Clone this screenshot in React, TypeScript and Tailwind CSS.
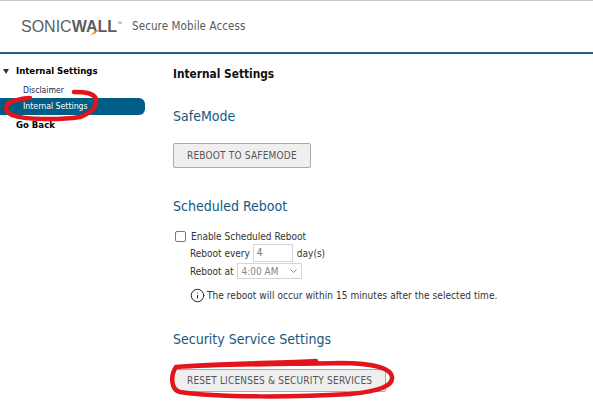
import { Info } from "lucide-react";

function SectionTitle({ children }: { children: string }) {
  return <h2 className="text-[14px] leading-5 font-normal text-[#14587f]">{children}</h2>;
}

function GrayButton({ children, short }: { children: string; short?: boolean }) {
  return (
    <button className={`${short ? "h-[23px]" : "h-[25px]"} px-[13px] bg-[#efefef] border border-[#a9a9a9] rounded-[2px] text-[10px] tracking-[0.2px] font-stretch-condensed text-[#555] whitespace-nowrap`}>
      {children}
    </button>
  );
}

export default function App() {
  return (
    <div className="relative w-[593px] h-[418px] overflow-hidden bg-white text-black font-['DejaVu_Sans',sans-serif] font-stretch-condensed">
      {/* Header */}
      <header className="h-[54px] border-t border-t-[#c8c8c8] border-b-2 border-b-[#1f6088] flex items-center pl-[21px]">
        <div className="relative flex items-start text-[#5d5d5d] font-['Liberation_Sans',sans-serif] text-[16px] leading-5">
          <span className="font-light">SONIC</span>
          <span className="font-bold">WALL</span>
          <span className="text-[5px] leading-[12px]">™</span>
          <svg className="absolute left-[68px] top-[12px]" width="14" height="8" viewBox="0 0 14 8">
            <path d="M13.5 .5 C 8 1 3 3 1 7.5 C 3 5 5 4.5 6 5 C 7 3 10 1 13.5 .5 Z" fill="#f08a1d" />
          </svg>
        </div>
        <span className="ml-[10px] text-[11.5px] tracking-[0.1px] text-[#5a5a5a]">Secure Mobile Access</span>
      </header>

      <div className="flex">
        {/* Sidebar */}
        <nav className="w-[145px] pt-[9px] text-[9.5px]">
          <div className="flex items-center h-[17px] pl-[3px] font-bold">
            <span className="w-0 h-0 border-x-[3.5px] border-x-transparent border-t-[5px] border-t-[#333] mr-[6px]" />
            <span className="ml-[1px]">Internal Settings</span>
          </div>
          <div className="h-[17px] pl-[23px] pt-[3px] text-[8.6px] leading-[14px] text-[#1c1c50]">Disclaimer</div>
          <div className="h-[17px] mt-[1px] pl-[23px] bg-[#005d86] rounded-r-[6px] text-[8.7px] leading-[17px] text-white">
            Internal Settings
          </div>
          <div className="h-[17px] pl-[16px] pt-[1px] font-bold leading-[17px]">Go Back</div>
        </nav>

        {/* Main */}
        <main className="pl-[28px] pt-[12px]">
          <h1 className="text-[11.8px] leading-4 font-bold text-[#111]">Internal Settings</h1>
          <div className="mt-[24px]">
            <SectionTitle>SafeMode</SectionTitle>
          </div>
          <div className="mt-[16px]">
            <GrayButton>REBOOT TO SAFEMODE</GrayButton>
          </div>
          <div className="mt-[28px]">
            <SectionTitle>Scheduled Reboot</SectionTitle>
          </div>
          <div className="mt-[13px] text-[10px] leading-[15px] text-[#333]">
            <label className="flex items-center h-[14px]">
              <input type="checkbox" className="w-[11px] h-[11px] m-0 mr-[5px] ml-[2px] appearance-none border border-[#777] rounded-[2px] bg-white" />
              <span>Enable Scheduled Reboot</span>
            </label>
            <div className="flex items-center h-[18px] pl-[17px] mt-[1px]">
              <span>Reboot every</span>
              <span className="ml-[3px] w-[40px] h-[18px] border border-[#d6d6d6] pl-[3px] leading-[16px] text-[#777]">4</span>
              <span className="ml-[4px]">day(s)</span>
            </div>
            <div className="flex items-center h-[16px] pl-[17px] mt-[1px]">
              <span>Reboot at</span>
              <span className="ml-[4px] w-[65px] h-[16px] border border-[#d6d6d6] pl-[3px] pr-[4px] flex items-center justify-between text-[#888]">
                4:00 AM
                <svg width="7" height="5" viewBox="0 0 7 5" fill="none" stroke="#888" strokeWidth="1">
                  <path d="M.5 .5 3.5 3.5 6.5 .5" />
                </svg>
              </span>
            </div>
            <div className="flex items-center h-[16px] pl-[17px] mt-[8px]">
              <Info className="w-[15px] h-[15px] mr-[2px] text-[#222]" strokeWidth={1.6} />
              <span className="whitespace-nowrap tracking-[0.06px]">The reboot will occur within 15 minutes after the selected time.</span>
            </div>
          </div>
          <div className="mt-[26px]">
            <SectionTitle>Security Service Settings</SectionTitle>
          </div>
          <div className="mt-[18px]">
            <GrayButton short>RESET LICENSES &amp; SECURITY SERVICES</GrayButton>
          </div>
        </main>
      </div>

      {/* Red annotations */}
      <svg className="absolute left-0 top-0 pointer-events-none" width="593" height="418" viewBox="0 0 593 418" fill="none" stroke="#e3141b" strokeWidth="4.5" strokeLinecap="round">
        <path d="M74 92 C 85 92 94 93 96 99 C 97 106 92 113 80 117 C 60 120 25 120 12 115 C 3 110 5 103 14 101 C 20 99 26 98 30 98" />
        <path d="M176 367 C 220 364 300 364 340 363 C 372 363 391 368 392 377 C 393 386 380 391 350 394 C 300 397 220 398 180 392 C 171 390 170 376 176 367 C 200 364 280 363 316 361" />
      </svg>
    </div>
  );
}
